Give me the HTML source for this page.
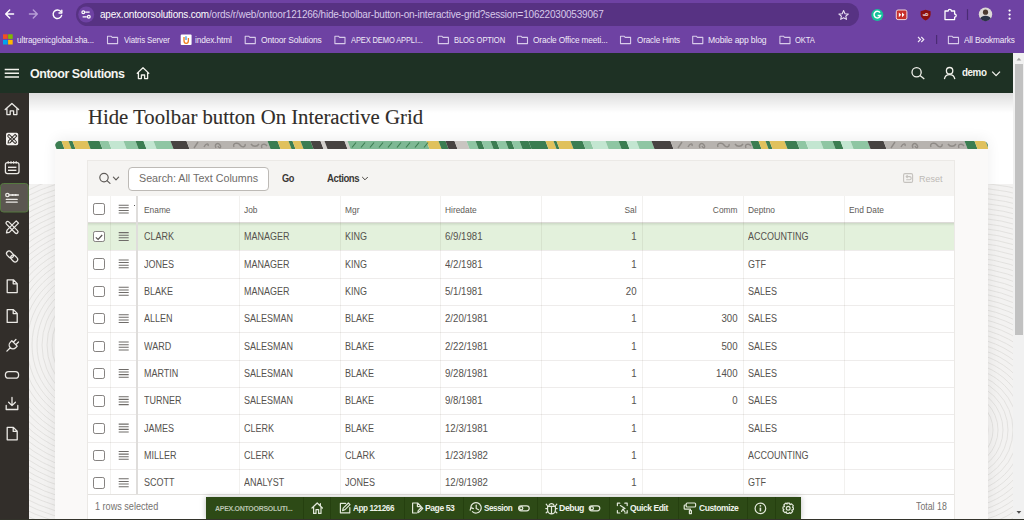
<!DOCTYPE html><html><head><meta charset="utf-8"><style>*{box-sizing:border-box;margin:0;padding:0}
html,body{width:1024px;height:520px;overflow:hidden;font-family:"Liberation Sans",sans-serif;background:#fff;position:relative}
.abs{position:absolute}
svg{position:absolute;overflow:visible}
#chrome{position:absolute;left:0;top:0;width:1024px;height:53px;background:#6e42a3}
#addr{position:absolute;left:75.5px;top:3px;width:783px;height:23px;border-radius:11.5px;background:#573283}
.url{position:absolute;left:100px;top:8.7px;font-size:10px;letter-spacing:-0.2px;color:#d7c9ea;white-space:nowrap}
.url b{font-weight:normal;color:#fff}
.bm{position:absolute;top:34px;font-size:9.5px;color:#f1ebf8;white-space:nowrap;letter-spacing:-0.15px}
#hdr{position:absolute;left:0;top:53px;width:1013px;height:40px;background:#1e3124}
.brand{position:absolute;left:29.5px;top:66.7px;font-size:12.5px;font-weight:bold;color:#f4f4f0;letter-spacing:-0.47px;white-space:nowrap}
#side{position:absolute;left:0;top:93px;width:29px;height:427px;background:#322e2a}
#tex{position:absolute;left:29px;top:93px;width:984px;height:427px;background:#f3f2f1}
#hero{position:absolute;left:29px;top:93px;width:984px;height:91px;background:#fff}
.title{position:absolute;left:87.5px;top:105.8px;font-family:"Liberation Serif",serif;font-size:20px;color:#312d2a;white-space:nowrap;-webkit-text-stroke:0.12px #312d2a}
#region{position:absolute;left:55px;top:141px;width:933px;height:379px;background:#faf9f8;border-radius:5px 5px 0 0}
#stripe{position:absolute;left:55px;top:141px;width:933px;height:8px;border-radius:5px 5px 0 0;overflow:hidden}
#tb{position:absolute;left:87px;top:160px;width:868px;height:36px;background:#f5f4f2;border:1px solid #ebe9e6;border-bottom:none}
.search{position:absolute;left:127.5px;top:166.5px;width:141px;height:24px;border:1px solid #bdbab6;border-radius:4px;background:#fff}
.ph{position:absolute;left:138.5px;top:172px;font-size:10.8px;color:#6f6c69;white-space:nowrap}
.btxt{position:absolute;font-size:10.2px;font-weight:bold;color:#3b3835;white-space:nowrap;letter-spacing:-0.45px}
#gbody{position:absolute;left:87px;top:196px;width:868px;height:324px;background:#fff;border-left:1px solid #ebe9e6;border-right:1px solid #ebe9e6}
.hdrrow{position:absolute;left:88px;width:866px;height:27px;background:#fff;border-bottom:1px solid #dcdad7}
.row{position:absolute;left:88px;width:866px;background:#fff}
.hl{position:absolute;left:88px;width:866px;height:1px;background:rgba(60,40,20,.085)}
.row.sel{background:#e3f1dc}
.vl{position:absolute;top:196px;width:1px;height:298px;background:rgba(60,40,20,.065)}
.cb{position:absolute;width:11.3px;height:11.3px;border:1.2px solid #858280;border-radius:2.2px;background:#fff}
.rm{position:absolute;width:10px;height:9px}
.rm i{display:block;height:1.1px;background:#6a6764;margin-bottom:1.55px}
.ht{position:absolute;font-size:9px;color:#5e5b58;white-space:nowrap}
.ct{position:absolute;font-size:10px;color:#55524e;white-space:nowrap;letter-spacing:-0.3px}
.r{text-align:right}
#foot{position:absolute;left:88px;top:494px;width:866px;height:25px;background:#fff;border-top:1px solid #e3e1de}
.ft{position:absolute;top:501px;font-size:10px;color:#75726f;white-space:nowrap}
#scroll{position:absolute;left:1013px;top:53px;width:11px;height:467px;background:#f1f1f1}
#thumb{position:absolute;left:1015px;top:64px;width:8px;height:271px;background:#c1c1c1}
#dev{position:absolute;left:206px;top:497px;width:595px;height:22px;background:#2d4a16;box-shadow:0 0 6px rgba(0,0,0,.25)}
.dt{position:absolute;top:501.9px;font-size:9.7px;font-weight:bold;color:#eef2ea;white-space:nowrap;letter-spacing:-0.5px}
.dsep{position:absolute;top:497px;width:1px;height:22px;background:#25400f}
#bline{position:absolute;left:0;top:519px;width:1024px;height:1px;background:#33332b}
.demo{position:absolute;left:961.5px;top:67.3px;font-size:10.3px;font-weight:bold;color:#f4f4f0;letter-spacing:-0.45px}
.reset{position:absolute;left:919.4px;top:173px;font-size:9.8px;color:#bdbab6;white-space:nowrap}
.dt.dim{color:#b9c4b0;font-size:7.4px;top:504px;letter-spacing:-0.3px}
.ct.u{transform:scaleX(.9);transform-origin:0 0;letter-spacing:0}
.ct.d{transform:scaleX(.965);transform-origin:0 0;letter-spacing:0}
.ct.dr{transform:scaleX(.965);transform-origin:100% 0;letter-spacing:0}
.ct.ur{transform:scaleX(.9);transform-origin:100% 0;letter-spacing:0}
.ht{transform:scaleX(.93);transform-origin:0 0}
.ht.r{transform-origin:100% 0}
#hshadow{position:absolute;left:29px;top:93px;width:984px;height:20px;background:linear-gradient(rgba(0,0,0,.13),rgba(0,0,0,0))}
#region{box-shadow:0 -2px 14px rgba(0,0,0,.07)}
#sideshadow{position:absolute;left:29px;top:93px;width:3px;height:427px;background:linear-gradient(90deg,rgba(0,0,0,.15),rgba(0,0,0,0))}
#hrshadow{position:absolute;left:88px;top:222.5px;width:866px;height:3px;background:linear-gradient(rgba(0,0,0,.10),rgba(0,0,0,0))}
</style></head><body><div id="chrome">
 <div id="addr"></div>
</div>
<div class="url" style="left:100px;transform:scaleX(0.9983);transform-origin:0 0"><b>apex.ontoorsolutions.com</b>/ords/r/web/ontoor121266/hide-toolbar-button-on-interactive-grid?session=106220300539067</div>
<div class="bm" style="left:17.3px;transform:scaleX(0.8653);transform-origin:0 0">ultragenicglobal.sha...</div>
<div class="bm" style="left:123.6px;transform:scaleX(0.8347);transform-origin:0 0">Viatris Server</div>
<div class="bm" style="left:195.4px;transform:scaleX(0.8801);transform-origin:0 0">index.html</div>
<div class="bm" style="left:261.2px;transform:scaleX(0.8863);transform-origin:0 0">Ontoor Solutions</div>
<div class="bm" style="left:351px;transform:scaleX(0.7910);transform-origin:0 0">APEX DEMO APPLI...</div>
<div class="bm" style="left:454px;transform:scaleX(0.7992);transform-origin:0 0">BLOG OPTION</div>
<div class="bm" style="left:532.8px;transform:scaleX(0.8711);transform-origin:0 0">Oracle Office meeti...</div>
<div class="bm" style="left:636.6px;transform:scaleX(0.8520);transform-origin:0 0">Oracle Hints</div>
<div class="bm" style="left:708.4px;transform:scaleX(0.9024);transform-origin:0 0">Mobile app blog</div>
<div class="bm" style="left:795px;transform:scaleX(0.8020);transform-origin:0 0">OKTA</div>
<div class="bm" style="left:964px;transform:scaleX(0.8645);transform-origin:0 0">All Bookmarks</div>
<div id="hdr"></div>
<div class="brand" style="left:29.7px;transform:scaleX(0.9993);transform-origin:0 0">Ontoor Solutions</div>
<div class="demo" style="left:961.7px;transform:scaleX(0.9544);transform-origin:0 0">demo</div>
<div id="side"></div>
<div id="tex"></div>
<svg width="1024" height="520" style="left:0;top:0"><defs><clipPath id="tc"><rect x="29" y="184" width="26" height="336"/><rect x="988" y="184" width="25" height="336"/></clipPath></defs><g clip-path="url(#tc)" fill="none" stroke="#dedddb" stroke-width="0.8"><circle cx="105" cy="345" r="8"/><circle cx="105" cy="345" r="13"/><circle cx="105" cy="345" r="18"/><circle cx="105" cy="345" r="23"/><circle cx="105" cy="345" r="28"/><circle cx="105" cy="345" r="33"/><circle cx="105" cy="345" r="38"/><circle cx="105" cy="345" r="43"/><circle cx="105" cy="345" r="48"/><circle cx="105" cy="345" r="53"/><circle cx="105" cy="345" r="58"/><circle cx="105" cy="345" r="63"/><circle cx="105" cy="345" r="68"/><circle cx="105" cy="345" r="73"/><circle cx="105" cy="345" r="78"/><circle cx="105" cy="345" r="83"/><circle cx="105" cy="345" r="88"/><circle cx="105" cy="345" r="93"/><circle cx="105" cy="345" r="98"/><circle cx="105" cy="345" r="103"/><circle cx="105" cy="345" r="108"/><circle cx="105" cy="345" r="113"/><circle cx="105" cy="345" r="118"/><circle cx="105" cy="345" r="123"/><circle cx="105" cy="345" r="128"/><circle cx="105" cy="345" r="133"/><circle cx="105" cy="345" r="138"/><circle cx="105" cy="345" r="143"/><circle cx="105" cy="345" r="148"/><circle cx="105" cy="345" r="153"/><circle cx="105" cy="345" r="158"/><circle cx="105" cy="345" r="163"/><circle cx="105" cy="345" r="168"/><circle cx="105" cy="345" r="173"/><circle cx="105" cy="345" r="178"/><circle cx="105" cy="345" r="183"/><circle cx="105" cy="345" r="188"/><circle cx="105" cy="345" r="193"/><circle cx="105" cy="345" r="198"/><circle cx="105" cy="345" r="203"/><circle cx="105" cy="345" r="208"/><circle cx="105" cy="345" r="213"/><circle cx="105" cy="345" r="218"/><circle cx="105" cy="345" r="223"/><circle cx="105" cy="345" r="228"/><circle cx="105" cy="345" r="233"/><circle cx="105" cy="345" r="238"/><circle cx="105" cy="345" r="243"/><circle cx="105" cy="345" r="248"/><circle cx="105" cy="345" r="253"/><circle cx="105" cy="345" r="258"/><circle cx="105" cy="345" r="263"/><circle cx="105" cy="345" r="268"/><circle cx="105" cy="345" r="273"/><circle cx="105" cy="345" r="278"/><circle cx="105" cy="345" r="283"/><circle cx="105" cy="345" r="288"/><circle cx="105" cy="345" r="293"/><circle cx="105" cy="345" r="298"/><circle cx="105" cy="345" r="303"/><circle cx="105" cy="345" r="308"/><circle cx="105" cy="345" r="313"/><circle cx="105" cy="345" r="318"/><circle cx="960" cy="430" r="8"/><circle cx="960" cy="430" r="13"/><circle cx="960" cy="430" r="18"/><circle cx="960" cy="430" r="23"/><circle cx="960" cy="430" r="28"/><circle cx="960" cy="430" r="33"/><circle cx="960" cy="430" r="38"/><circle cx="960" cy="430" r="43"/><circle cx="960" cy="430" r="48"/><circle cx="960" cy="430" r="53"/><circle cx="960" cy="430" r="58"/><circle cx="960" cy="430" r="63"/><circle cx="960" cy="430" r="68"/><circle cx="960" cy="430" r="73"/><circle cx="960" cy="430" r="78"/><circle cx="960" cy="430" r="83"/><circle cx="960" cy="430" r="88"/><circle cx="960" cy="430" r="93"/><circle cx="960" cy="430" r="98"/><circle cx="960" cy="430" r="103"/><circle cx="960" cy="430" r="108"/><circle cx="960" cy="430" r="113"/><circle cx="960" cy="430" r="118"/><circle cx="960" cy="430" r="123"/><circle cx="960" cy="430" r="128"/><circle cx="960" cy="430" r="133"/><circle cx="960" cy="430" r="138"/><circle cx="960" cy="430" r="143"/><circle cx="960" cy="430" r="148"/><circle cx="960" cy="430" r="153"/><circle cx="960" cy="430" r="158"/><circle cx="960" cy="430" r="163"/><circle cx="960" cy="430" r="168"/><circle cx="960" cy="430" r="173"/><circle cx="960" cy="430" r="178"/><circle cx="960" cy="430" r="183"/><circle cx="960" cy="430" r="188"/><circle cx="960" cy="430" r="193"/><circle cx="960" cy="430" r="198"/><circle cx="960" cy="430" r="203"/><circle cx="960" cy="430" r="208"/><circle cx="960" cy="430" r="213"/><circle cx="960" cy="430" r="218"/><circle cx="960" cy="430" r="223"/><circle cx="960" cy="430" r="228"/><circle cx="960" cy="430" r="233"/><circle cx="960" cy="430" r="238"/><circle cx="960" cy="430" r="243"/><circle cx="960" cy="430" r="248"/><circle cx="960" cy="430" r="253"/><circle cx="960" cy="430" r="258"/><circle cx="960" cy="430" r="263"/><circle cx="960" cy="430" r="268"/><circle cx="960" cy="430" r="273"/><circle cx="960" cy="430" r="278"/><circle cx="960" cy="430" r="283"/><circle cx="960" cy="430" r="288"/><circle cx="960" cy="430" r="293"/><circle cx="960" cy="430" r="298"/><circle cx="960" cy="430" r="303"/><circle cx="960" cy="430" r="308"/><circle cx="960" cy="430" r="313"/><circle cx="960" cy="430" r="318"/></g></svg><div id="hero"></div><div id="hshadow"></div>
<div class="title" style="left:87.9px;transform:scaleX(1.0367);transform-origin:0 0">Hide Toolbar button On Interactive Grid</div>
<div id="region"></div>
<div id="stripe"><svg width="933" height="8" viewBox="0 0 933 8" style="left:0;top:0"><path d="M-1.5 0H6.5L9.5 8H1.5Z" fill="#3b7d51"/><path d="M6.5 0H13.5L16.5 8H9.5Z" fill="#e0c15c"/><path d="M13.5 0H17.5L20.5 8H16.5Z" fill="#3b7d51"/><path d="M17.5 0H32.5L35.5 8H20.5Z" fill="#e0c15c"/><path d="M32.5 0H44.5L47.5 8H35.5Z" fill="#3b7d51"/><path d="M44.5 0H53.5L56.5 8H47.5Z" fill="#8fc6a3"/><path d="M53.5 0H68.5L71.5 8H56.5Z" fill="#c3e6d1"/><path d="M68.5 0H80.5L83.5 8H71.5Z" fill="#8fc6a3"/><path d="M80.5 0H88.5L91.5 8H83.5Z" fill="#3b7d51"/><path d="M88.5 0H98.5L101.5 8H91.5Z" fill="#c3e6d1"/><path d="M98.5 0H115.5L118.5 8H101.5Z" fill="#8fc6a3"/><path d="M115.5 0H131.5L134.5 8H118.5Z" fill="#474341"/><path d="M131.5 0H212.5L215.5 8H134.5Z" fill="#b7b3af"/><path d="M212.5 0H222.5L225.5 8H215.5Z" fill="#3b7d51"/><path d="M222.5 0H233.5L236.5 8H225.5Z" fill="#e0c15c"/><path d="M233.5 0H237.5L240.5 8H236.5Z" fill="#3b7d51"/><path d="M237.5 0H245.5L248.5 8H240.5Z" fill="#e0c15c"/><path d="M245.5 0H255.5L258.5 8H248.5Z" fill="#3b7d51"/><path d="M255.5 0H265.5L268.5 8H258.5Z" fill="#474341"/><path d="M265.5 0H269.5L272.5 8H268.5Z" fill="#d3d0cc"/><path d="M269.5 0H289.5L292.5 8H272.5Z" fill="#474341"/><path d="M289.5 0H292.5L295.5 8H292.5Z" fill="#d3d0cc"/><path d="M292.5 0H371.5L374.5 8H295.5Z" fill="#7eb894"/><path d="M371.5 0H383.5L386.5 8H374.5Z" fill="#e0c15c"/><path d="M383.5 0H390.5L393.5 8H386.5Z" fill="#3b7d51"/><path d="M390.5 0H399.5L402.5 8H393.5Z" fill="#474341"/><path d="M399.5 0H411.5L414.5 8H402.5Z" fill="#c9c5c1"/><path d="M411.5 0H420.5L423.5 8H414.5Z" fill="#8fc6a3"/><path d="M420.5 0H426.5L429.5 8H423.5Z" fill="#3b7d51"/><path d="M426.5 0H435.5L438.5 8H429.5Z" fill="#8fc6a3"/><path d="M435.5 0H441.5L444.5 8H438.5Z" fill="#3b7d51"/><path d="M441.5 0H450.5L453.5 8H444.5Z" fill="#8fc6a3"/><path d="M450.5 0H456.5L459.5 8H453.5Z" fill="#3b7d51"/><path d="M456.5 0H464.5L467.5 8H459.5Z" fill="#8fc6a3"/><path d="M464.5 0H473.5L476.5 8H467.5Z" fill="#3b7d51"/><path d="M473.5 0H490.5L493.5 8H476.5Z" fill="#3b7d51"/><path d="M490.5 0H498.5L501.5 8H493.5Z" fill="#e0c15c"/><path d="M498.5 0H501.5L504.5 8H501.5Z" fill="#3b7d51"/><path d="M501.5 0H515.5L518.5 8H504.5Z" fill="#e0c15c"/><path d="M515.5 0H527.5L530.5 8H518.5Z" fill="#3b7d51"/><path d="M527.5 0H535.5L538.5 8H530.5Z" fill="#8fc6a3"/><path d="M535.5 0H550.5L553.5 8H538.5Z" fill="#c3e6d1"/><path d="M550.5 0H563.5L566.5 8H553.5Z" fill="#8fc6a3"/><path d="M563.5 0H571.5L574.5 8H566.5Z" fill="#3b7d51"/><path d="M571.5 0H581.5L584.5 8H574.5Z" fill="#c3e6d1"/><path d="M581.5 0H596.5L599.5 8H584.5Z" fill="#8fc6a3"/><path d="M596.5 0H615.5L618.5 8H599.5Z" fill="#474341"/><path d="M615.5 0H695.5L698.5 8H618.5Z" fill="#b7b3af"/><path d="M695.5 0H703.5L706.5 8H698.5Z" fill="#3b7d51"/><path d="M703.5 0H710.5L713.5 8H706.5Z" fill="#e0c15c"/><path d="M710.5 0H714.5L717.5 8H713.5Z" fill="#3b7d51"/><path d="M714.5 0H729.5L732.5 8H717.5Z" fill="#e0c15c"/><path d="M729.5 0H741.5L744.5 8H732.5Z" fill="#3b7d51"/><path d="M741.5 0H750.5L753.5 8H744.5Z" fill="#8fc6a3"/><path d="M750.5 0H765.5L768.5 8H753.5Z" fill="#c3e6d1"/><path d="M765.5 0H777.5L780.5 8H768.5Z" fill="#8fc6a3"/><path d="M777.5 0H785.5L788.5 8H780.5Z" fill="#3b7d51"/><path d="M785.5 0H795.5L798.5 8H788.5Z" fill="#c3e6d1"/><path d="M795.5 0H812.5L815.5 8H798.5Z" fill="#8fc6a3"/><path d="M812.5 0H828.5L831.5 8H815.5Z" fill="#474341"/><path d="M828.5 0H909.5L912.5 8H831.5Z" fill="#b7b3af"/><path d="M909.5 0H919.5L922.5 8H912.5Z" fill="#3b7d51"/><path d="M919.5 0H930.5L933.5 8H922.5Z" fill="#e0c15c"/><path d="M930.5 0H934.5L937.5 8H933.5Z" fill="#3b7d51"/><path d="M934.5 0H942.5L945.5 8H937.5Z" fill="#e0c15c"/><path d="M942.5 0H943.5L946.5 8H945.5Z" fill="#3b7d51"/><g transform="translate(133)" fill="none" stroke="#8f8b87" stroke-width="1.4"><path d="M6 7L10 1M16 6C18 2 21 2 20 5M28 7C26 3 30 1 32 4C34 7 31 8 30 5M46 6C44 2 50 1 52 4C54 7 58 6 57 3M63 3C65 6 69 6 71 3M74 7C72 3 77 2 79 5"/></g><path d="M297 6.5L301 1.5" stroke="#3b7d51" stroke-width="1.1"/><path d="M306 6.5L310 1.5" stroke="#3b7d51" stroke-width="1.1"/><path d="M315 6.5L319 1.5" stroke="#3b7d51" stroke-width="1.1"/><path d="M324 6.5L328 1.5" stroke="#3b7d51" stroke-width="1.1"/><path d="M333 6.5L337 1.5" stroke="#3b7d51" stroke-width="1.1"/><path d="M342 6.5L346 1.5" stroke="#3b7d51" stroke-width="1.1"/><path d="M351 6.5L355 1.5" stroke="#3b7d51" stroke-width="1.1"/><path d="M360 6.5L364 1.5" stroke="#3b7d51" stroke-width="1.1"/><path d="M369 6.5L373 1.5" stroke="#3b7d51" stroke-width="1.1"/><g transform="translate(617)" fill="none" stroke="#8f8b87" stroke-width="1.4"><path d="M6 7L10 1M16 6C18 2 21 2 20 5M28 7C26 3 30 1 32 4C34 7 31 8 30 5M46 6C44 2 50 1 52 4C54 7 58 6 57 3M63 3C65 6 69 6 71 3M74 7C72 3 77 2 79 5"/></g><g transform="translate(830)" fill="none" stroke="#8f8b87" stroke-width="1.4"><path d="M6 7L10 1M16 6C18 2 21 2 20 5M28 7C26 3 30 1 32 4C34 7 31 8 30 5M46 6C44 2 50 1 52 4C54 7 58 6 57 3M63 3C65 6 69 6 71 3M74 7C72 3 77 2 79 5"/></g></svg></div>
<div id="tb"></div>
<div class="search"></div>
<div class="ph" style="left:138.5px;transform:scaleX(0.9931);transform-origin:0 0">Search: All Text Columns</div>
<div class="btxt" style="left:282.2px;top:172.5px;transform:scaleX(0.9057);transform-origin:0 0">Go</div>
<div class="btxt" style="left:327px;top:172.5px;transform:scaleX(0.9410);transform-origin:0 0">Actions</div>
<div class="reset" style="left:919.4px;transform:scaleX(0.9221);transform-origin:0 0">Reset</div>
<div id="gbody"></div>

<div id="gridcells"><div class="hdrrow" style="top:196px"></div>
<div class="cb" style="left:93.3px;top:203.4px"></div>

<div class="abs" style="left:134px;top:205px;width:1.3px;height:1.3px;background:#555"></div>
<div class="ht" style="left:143.5px;top:204.5px">Ename</div>
<div class="ht" style="left:243.8px;top:204.5px">Job</div>
<div class="ht" style="left:344.6px;top:204.5px">Mgr</div>
<div class="ht" style="left:445.4px;top:204.5px">Hiredate</div>
<div class="ht r" style="left:541.3px;width:95.50000000000007px;top:204.5px">Sal</div>
<div class="ht r" style="left:642.1px;width:95.49999999999996px;top:204.5px">Comm</div>
<div class="ht" style="left:747.9px;top:204.5px">Deptno</div>
<div class="ht" style="left:848.7px;top:204.5px">End Date</div>
<div class="row sel" style="top:222.9px;height:27.86px"></div>
<div class="cb" style="left:93.3px;top:231.1px"><svg width="11" height="11" viewBox="0 0 11 11" style="position:absolute;left:-0.5px;top:-0.5px"><path d="M1.8 5.4 L4.1 7.5 L8.2 3.0" fill="none" stroke="#55524f" stroke-width="1.15"/></svg></div>

<div class="ct u" style="left:143.5px;top:231.20000000000002px">CLARK</div>
<div class="ct u" style="left:243.8px;top:231.20000000000002px">MANAGER</div>
<div class="ct u" style="left:344.6px;top:231.20000000000002px">KING</div>
<div class="ct d" style="left:445.4px;top:231.20000000000002px">6/9/1981</div>
<div class="ct r dr" style="left:541.3px;width:95.50000000000007px;top:231.20000000000002px">1</div>
<div class="ct u" style="left:747.9px;top:231.20000000000002px">ACCOUNTING</div>
<div class="row" style="top:250.26px;height:27.86px"></div>
<div class="hl" style="top:250.26px"></div>
<div class="cb" style="left:93.3px;top:258.46px"></div>

<div class="ct u" style="left:143.5px;top:258.56px">JONES</div>
<div class="ct u" style="left:243.8px;top:258.56px">MANAGER</div>
<div class="ct u" style="left:344.6px;top:258.56px">KING</div>
<div class="ct d" style="left:445.4px;top:258.56px">4/2/1981</div>
<div class="ct r dr" style="left:541.3px;width:95.50000000000007px;top:258.56px">1</div>
<div class="ct u" style="left:747.9px;top:258.56px">GTF</div>
<div class="row" style="top:277.62px;height:27.86px"></div>
<div class="hl" style="top:277.62px"></div>
<div class="cb" style="left:93.3px;top:285.82px"></div>

<div class="ct u" style="left:143.5px;top:285.92px">BLAKE</div>
<div class="ct u" style="left:243.8px;top:285.92px">MANAGER</div>
<div class="ct u" style="left:344.6px;top:285.92px">KING</div>
<div class="ct d" style="left:445.4px;top:285.92px">5/1/1981</div>
<div class="ct r dr" style="left:541.3px;width:95.50000000000007px;top:285.92px">20</div>
<div class="ct u" style="left:747.9px;top:285.92px">SALES</div>
<div class="row" style="top:304.98px;height:27.86px"></div>
<div class="hl" style="top:304.98px"></div>
<div class="cb" style="left:93.3px;top:313.18px"></div>

<div class="ct u" style="left:143.5px;top:313.28000000000003px">ALLEN</div>
<div class="ct u" style="left:243.8px;top:313.28000000000003px">SALESMAN</div>
<div class="ct u" style="left:344.6px;top:313.28000000000003px">BLAKE</div>
<div class="ct d" style="left:445.4px;top:313.28000000000003px">2/20/1981</div>
<div class="ct r dr" style="left:541.3px;width:95.50000000000007px;top:313.28000000000003px">1</div>
<div class="ct r dr" style="left:642.1px;width:95.49999999999996px;top:313.28000000000003px">300</div>
<div class="ct u" style="left:747.9px;top:313.28000000000003px">SALES</div>
<div class="row" style="top:332.34000000000003px;height:27.86px"></div>
<div class="hl" style="top:332.34px"></div>
<div class="cb" style="left:93.3px;top:340.54px"></div>

<div class="ct u" style="left:143.5px;top:340.64000000000004px">WARD</div>
<div class="ct u" style="left:243.8px;top:340.64000000000004px">SALESMAN</div>
<div class="ct u" style="left:344.6px;top:340.64000000000004px">BLAKE</div>
<div class="ct d" style="left:445.4px;top:340.64000000000004px">2/22/1981</div>
<div class="ct r dr" style="left:541.3px;width:95.50000000000007px;top:340.64000000000004px">1</div>
<div class="ct r dr" style="left:642.1px;width:95.49999999999996px;top:340.64000000000004px">500</div>
<div class="ct u" style="left:747.9px;top:340.64000000000004px">SALES</div>
<div class="row" style="top:359.70000000000005px;height:27.86px"></div>
<div class="hl" style="top:359.70px"></div>
<div class="cb" style="left:93.3px;top:367.90000000000003px"></div>

<div class="ct u" style="left:143.5px;top:368.00000000000006px">MARTIN</div>
<div class="ct u" style="left:243.8px;top:368.00000000000006px">SALESMAN</div>
<div class="ct u" style="left:344.6px;top:368.00000000000006px">BLAKE</div>
<div class="ct d" style="left:445.4px;top:368.00000000000006px">9/28/1981</div>
<div class="ct r dr" style="left:541.3px;width:95.50000000000007px;top:368.00000000000006px">1</div>
<div class="ct r dr" style="left:642.1px;width:95.49999999999996px;top:368.00000000000006px">1400</div>
<div class="ct u" style="left:747.9px;top:368.00000000000006px">SALES</div>
<div class="row" style="top:387.06px;height:27.86px"></div>
<div class="hl" style="top:387.06px"></div>
<div class="cb" style="left:93.3px;top:395.26px"></div>

<div class="ct u" style="left:143.5px;top:395.36px">TURNER</div>
<div class="ct u" style="left:243.8px;top:395.36px">SALESMAN</div>
<div class="ct u" style="left:344.6px;top:395.36px">BLAKE</div>
<div class="ct d" style="left:445.4px;top:395.36px">9/8/1981</div>
<div class="ct r dr" style="left:541.3px;width:95.50000000000007px;top:395.36px">1</div>
<div class="ct r dr" style="left:642.1px;width:95.49999999999996px;top:395.36px">0</div>
<div class="ct u" style="left:747.9px;top:395.36px">SALES</div>
<div class="row" style="top:414.41999999999996px;height:27.86px"></div>
<div class="hl" style="top:414.42px"></div>
<div class="cb" style="left:93.3px;top:422.61999999999995px"></div>

<div class="ct u" style="left:143.5px;top:422.71999999999997px">JAMES</div>
<div class="ct u" style="left:243.8px;top:422.71999999999997px">CLERK</div>
<div class="ct u" style="left:344.6px;top:422.71999999999997px">BLAKE</div>
<div class="ct d" style="left:445.4px;top:422.71999999999997px">12/3/1981</div>
<div class="ct r dr" style="left:541.3px;width:95.50000000000007px;top:422.71999999999997px">1</div>
<div class="ct u" style="left:747.9px;top:422.71999999999997px">SALES</div>
<div class="row" style="top:441.78px;height:27.86px"></div>
<div class="hl" style="top:441.78px"></div>
<div class="cb" style="left:93.3px;top:449.97999999999996px"></div>

<div class="ct u" style="left:143.5px;top:450.08px">MILLER</div>
<div class="ct u" style="left:243.8px;top:450.08px">CLERK</div>
<div class="ct u" style="left:344.6px;top:450.08px">CLARK</div>
<div class="ct d" style="left:445.4px;top:450.08px">1/23/1982</div>
<div class="ct r dr" style="left:541.3px;width:95.50000000000007px;top:450.08px">1</div>
<div class="ct u" style="left:747.9px;top:450.08px">ACCOUNTING</div>
<div class="row" style="top:469.14px;height:27.86px"></div>
<div class="hl" style="top:469.14px"></div>
<div class="cb" style="left:93.3px;top:477.34px"></div>

<div class="ct u" style="left:143.5px;top:477.44px">SCOTT</div>
<div class="ct u" style="left:243.8px;top:477.44px">ANALYST</div>
<div class="ct u" style="left:344.6px;top:477.44px">JONES</div>
<div class="ct d" style="left:445.4px;top:477.44px">12/9/1982</div>
<div class="ct r dr" style="left:541.3px;width:95.50000000000007px;top:477.44px">1</div>
<div class="ct u" style="left:747.9px;top:477.44px">GTF</div>
<div id="hrshadow"></div>
<svg width="1024" height="520" style="left:0;top:0"><path d="M118.7 205.20H128.7M118.7 207.82H128.7M118.7 210.44H128.7M118.7 213.06H128.7M118.7 232.60H128.7M118.7 235.22H128.7M118.7 237.84H128.7M118.7 240.46H128.7M118.7 259.96H128.7M118.7 262.58H128.7M118.7 265.20H128.7M118.7 267.82H128.7M118.7 287.32H128.7M118.7 289.94H128.7M118.7 292.56H128.7M118.7 295.18H128.7M118.7 314.68H128.7M118.7 317.30H128.7M118.7 319.92H128.7M118.7 322.54H128.7M118.7 342.04H128.7M118.7 344.66H128.7M118.7 347.28H128.7M118.7 349.90H128.7M118.7 369.40H128.7M118.7 372.02H128.7M118.7 374.64H128.7M118.7 377.26H128.7M118.7 396.76H128.7M118.7 399.38H128.7M118.7 402.00H128.7M118.7 404.62H128.7M118.7 424.12H128.7M118.7 426.74H128.7M118.7 429.36H128.7M118.7 431.98H128.7M118.7 451.48H128.7M118.7 454.10H128.7M118.7 456.72H128.7M118.7 459.34H128.7M118.7 478.84H128.7M118.7 481.46H128.7M118.7 484.08H128.7M118.7 486.70H128.7" stroke="#6f6c69" stroke-width="1.05" fill="none"/></svg>
<div class="vl" style="left:110px"></div>
<div class="abs" style="left:136px;top:196px;width:2px;height:298px;background:#dfdddb"></div>
<div class="vl" style="left:238.8px"></div>
<div class="vl" style="left:339.6px"></div>
<div class="vl" style="left:440.4px"></div>
<div class="vl" style="left:541.3px"></div>
<div class="vl" style="left:642.1px"></div>
<div class="vl" style="left:742.9px"></div>
<div class="vl" style="left:843.7px"></div></div>
<div id="foot"></div>
<div class="ft" style="left:95.2px;transform:scaleX(0.9096);transform-origin:0 0">1 rows selected</div>
<div class="ft" style="left:916.2px;transform:scaleX(0.8792);transform-origin:0 0">Total 18</div>
<div id="scroll"></div>
<div id="thumb"></div>
<div id="dev"></div>
<div class="dsep" style="left:302.6px"></div>
<div class="dsep" style="left:330.2px"></div>
<div class="dsep" style="left:403.8px"></div>
<div class="dsep" style="left:462.8px"></div>
<div class="dsep" style="left:537.3px"></div>
<div class="dsep" style="left:608.6px"></div>
<div class="dsep" style="left:677.6px"></div>
<div class="dsep" style="left:746.6px"></div>
<div class="dsep" style="left:774.6px"></div>
<div class="dt dim" style="left:214.5px;transform:scaleX(0.9468);transform-origin:0 0">APEX.ONTOORSOLUTI...</div>
<div class="dt" style="left:353px;transform:scaleX(0.8391);transform-origin:0 0">App 121266</div>
<div class="dt" style="left:424.7px;transform:scaleX(0.8845);transform-origin:0 0">Page 53</div>
<div class="dt" style="left:484.3px;transform:scaleX(0.8409);transform-origin:0 0">Session</div>
<div class="dt" style="left:559.2px;transform:scaleX(0.9045);transform-origin:0 0">Debug</div>
<div class="dt" style="left:630px;transform:scaleX(0.8807);transform-origin:0 0">Quick Edit</div>
<div class="dt" style="left:698.7px;transform:scaleX(0.8835);transform-origin:0 0">Customize</div>
<div id="bline"></div>
<svg id="ov" width="1024" height="520" viewBox="0 0 1024 520" style="left:0;top:0">
 <!-- chrome nav -->
 <g fill="none" stroke="#fff" stroke-width="1.4" stroke-linecap="round" stroke-linejoin="round">
  <path d="M13.6 14H5.9M9.7 10L5.7 14L9.7 18"/>
  <path d="M29.4 14H37.1M33.3 10L37.3 14L33.3 18" stroke="#b79ed6"/>
  <path d="M61.6 15.4A4.3 4.3 0 1 1 60.6 11.3"/>
  <path d="M61.8 10.2V13H59"/>
 </g>
 <circle cx="86.2" cy="14.5" r="8" fill="#6e42a3"/>
 <g fill="none" stroke="#fff" stroke-width="1.2">
  <circle cx="83.3" cy="12.2" r="1.4"/><path d="M85.2 12.2H89.6M82.6 16.8H86.8"/><circle cx="88.8" cy="16.8" r="1.4"/>
 </g>
 <path d="M843.6 10.6L845 13.7L848.3 14L845.8 16.2L846.5 19.4L843.6 17.7L840.7 19.4L841.4 16.2L838.9 14L842.2 13.7Z" fill="none" stroke="#e9e0f3" stroke-width="1.1" stroke-linejoin="round"/>
 <circle cx="877.3" cy="15" r="6" fill="#15c39a"/>
 <path d="M880 12.6A3.3 3.3 0 1 0 880.6 15.4H877.6" fill="none" stroke="#fff" stroke-width="1.5"/>
 <rect x="896.3" y="10" width="10.6" height="9.6" rx="1.8" fill="#c7302c" stroke="#f3d7d7" stroke-width="1"/>
 <path d="M898.8 12.4L901.2 14.8L898.8 17.2ZM902 12.4L904.4 14.8L902 17.2Z" fill="#fff"/>
 <path d="M920.6 11.2L925.6 9.8L930.6 11.2V14.5C930.6 17.4 928.2 19.2 925.6 20.4C923 19.2 920.6 17.4 920.6 14.5Z" fill="#8c0f0f"/>
 <text x="925.6" y="16.3" font-size="4.2" fill="#fff" text-anchor="middle" font-family="Liberation Sans" font-weight="bold">uD</text>
 <path d="M945 11H948.2A1.6 1.6 0 0 1 951.4 11H954.6V14A1.6 1.6 0 0 1 954.6 17.2V19.6H945Z" fill="none" stroke="#fff" stroke-width="1.3" stroke-linejoin="round"/>
 <path d="M967.5 9.2V20" stroke="#4a2b74" stroke-width="1.2"/>
 <circle cx="985.5" cy="14.3" r="6.7" fill="#dcd9d6"/>
 <path d="M980.2 18.6C981 16.6 983 15.8 985.5 15.8C988 15.8 990 16.6 990.8 18.6A6.7 6.7 0 0 1 980.2 18.6Z" fill="#2a3346"/>
 <circle cx="985.5" cy="12.2" r="2.6" fill="#4a3a30"/>
 <g fill="#fff"><circle cx="1009.6" cy="10.6" r="1.15"/><circle cx="1009.6" cy="14.6" r="1.15"/><circle cx="1009.6" cy="18.6" r="1.15"/></g>
 <!-- bookmarks -->
 <rect x="3" y="34.3" width="4.6" height="4.6" fill="#f25022"/><rect x="8.1" y="34.3" width="4.6" height="4.6" fill="#7fba00"/>
 <rect x="3" y="39.9" width="4.6" height="4.6" fill="#00a4ef"/><rect x="8.1" y="39.9" width="4.6" height="4.6" fill="#ffb900"/>
 <rect x="180.7" y="34.5" width="10.9" height="10.5" rx="1" fill="#fff"/>
 <path d="M184 37V40.5C184 42.5 185 43.4 186.2 43.4C187.4 43.4 188.4 42.5 188.4 40.5V38" fill="none" stroke="#f07a1a" stroke-width="1.3"/>
 <path d="M186 36.2V40" stroke="#2a8fe0" stroke-width="1.2"/>
 <g fill="none" stroke="#d8cbea" stroke-width="1.1" stroke-linejoin="round">
  <path d="M107.5 36.2H111L112.2 37.4H117.6V43.6H107.5Z"/>
  <path d="M245.2 36.2H248.7L249.9 37.4H255.3V43.6H245.2Z"/>
  <path d="M334.9 36.2H338.4L339.6 37.4H345V43.6H334.9Z"/>
  <path d="M438.3 36.2H441.8L443 37.4H448.4V43.6H438.3Z"/>
  <path d="M517.4 36.2H520.9L522.1 37.4H527.5V43.6H517.4Z"/>
  <path d="M620.5 36.2H624L625.2 37.4H630.6V43.6H620.5Z"/>
  <path d="M692.7 36.2H696.2L697.4 37.4H702.8V43.6H692.7Z"/>
  <path d="M779.9 36.2H783.4L784.6 37.4H790V43.6H779.9Z"/>
  <path d="M948.4 36.2H951.9L953.1 37.4H958.5V43.6H948.4Z"/>
 </g>
 <path d="M918 37L920.5 39.5L918 42M921.3 37L923.8 39.5L921.3 42" fill="none" stroke="#f1ebf8" stroke-width="1.1"/>
 <path d="M936.6 35V44" stroke="#4a2b74" stroke-width="1.2"/>

 <!-- sidebar -->
 <rect x="0.5" y="183.5" width="27.8" height="28.5" rx="3" fill="#5b5650" stroke="#55793f" stroke-width="1"/>
 <g fill="none" stroke="#ebe9e5" stroke-width="1.3" stroke-linejoin="round" stroke-linecap="round">
  <path d="M5.2 109.6L11.9 103.4L18.6 109.6M6.9 108.2V114.6H10.2V110.8H13.6V114.6H16.9V108.2"/>
  <rect x="5.4" y="162.6" width="13.6" height="11" rx="2"/>
  <circle cx="7.4" cy="195" r="1.7"/><path d="M9.1 195H18.4"/><path d="M6.3 199.4H17.2M6.3 202.2H17.2"/>
  <rect x="10.4" y="219.6" width="3.2" height="15.6" rx="1.6" transform="rotate(-45 12 227.4)"/>
  <path d="M10.4 219.8H13.6V232.8L12 235.2L10.4 232.8Z" transform="rotate(45 12 227.4)"/>
  <rect x="6.2" y="252" width="7.6" height="5" rx="2.5" transform="rotate(45 10 254.5)"/>
  <rect x="10.4" y="256" width="7.6" height="5" rx="2.5" transform="rotate(45 14.2 258.5)"/>
  <path d="M7.2 279.8H13.4L17.2 283.6V292.6H7.2Z M13.2 280V283.8H17"/>
  <path d="M7.2 309.6H13.4L17.2 313.4V322.4H7.2Z M13.2 309.8V313.6H17"/>
  <g transform="translate(13.4 344.6) rotate(45)"><path d="M-3.8 -1.6H3.8V0.6A3.8 3.8 0 0 1 -3.8 0.6Z M-1.8 -1.6V-5.4M1.8 -1.6V-5.4M0 4.4V9.2"/></g>
  <rect x="5.4" y="371.6" width="13.2" height="6.6" rx="3.3"/>
  <path d="M12 397.5V405.5M8.6 402.2L12 405.6L15.4 402.2M6.2 405.5V409.5H17.8V405.5"/>
  <path d="M7.2 427.4H13.4L17.2 431.2V439.8H7.2Z M13.2 427.6V431.4H17"/>
 </g>
 <g fill="#ebe9e5">
  <rect x="7.6" y="161.2" width="1.2" height="2.4"/><rect x="10.4" y="161.2" width="1.2" height="2.4"/><rect x="13" y="161.2" width="1.2" height="2.4"/><rect x="15.6" y="161.2" width="1.2" height="2.4"/>
  <rect x="8" y="166.6" width="8.4" height="1.4"/><rect x="8" y="169.6" width="8.4" height="1.4"/>
  <circle cx="12.6" cy="195" r="1.1"/><circle cx="15.6" cy="195" r="1.1"/>
 </g>
 <rect x="6" y="132.8" width="12.2" height="12.4" rx="1.6" fill="#f3f1ee"/>
 <g fill="none" stroke="#322e2a" stroke-width="1">
  <rect x="10.9" y="133.4" width="2.4" height="11.2" rx="1.2" transform="rotate(-45 12.1 139)"/>
  <path d="M10.9 133.6H13.3V143L12.1 144.6L10.9 143Z" transform="rotate(45 12.1 139)"/>
 </g>
 <!-- grid toolbar -->
 <g fill="none" stroke="#5f5c59" stroke-width="1.2" stroke-linecap="round" stroke-linejoin="round">
  <circle cx="104" cy="177.6" r="4.2"/><path d="M107 180.6L110 183.4"/>
  <path d="M113.4 177.2L116 179.8L118.6 177.2"/>
 </g>
 <path d="M362.2 177L365 179.8L367.8 177" fill="none" stroke="#46433f" stroke-width="1"/>
 <g fill="none" stroke="#c5c2be" stroke-width="1.1" stroke-linejoin="round">
  <rect x="903.6" y="173.6" width="9" height="8.8" rx="1.4"/>
  <path d="M909.4 176.6H906.2M907.6 175.2L906.1 176.6L907.6 178M906.2 176.6H909.6A1.6 1.6 0 0 1 909.6 179.8H906.2"/>
 </g>
 <!-- scrollbar -->
 <path d="M1016.5 60.6L1018.9 57.8L1021.3 60.6Z" fill="#a3a3a3"/>
 <path d="M1016.5 511L1018.9 513.8L1021.3 511Z" fill="#505050"/>
 <!-- dev toolbar icons -->
 <g fill="none" stroke="#e2e8da" stroke-width="1.2" stroke-linejoin="round" stroke-linecap="round">
  <path d="M312 508L317.2 503L322.4 508M313.6 506.6V513.4H316V509.6H318.6V513.4H321V506.6M320.4 503.6V505.6"/>
  <path d="M345.6 503.4H340.4V512.8H349.8V507.6M342.6 510.6L343.2 508.2L348.4 503L350 504.6L344.8 509.8Z"/>
  <path d="M412.6 503H417.6L421 506.4V508.4M412.6 503V513H416.6M417.4 503V506.6H421M417.8 512.6L418.2 510.6L421.6 507.2L422.8 508.4L419.4 511.8Z"/>
  <path d="M472.4 511.6A5.2 5.2 0 1 0 470.8 507.4M470.2 510.2L470.9 507.6L473.4 508.6M476.2 505V508.4L478.6 509.8"/>
  <rect x="518.6" y="505.8" width="10.6" height="5" rx="2.5"/><circle cx="521.2" cy="508.3" r="1.6"/>
  <rect x="589.2" y="505.8" width="10.6" height="5" rx="2.5"/><circle cx="591.8" cy="508.3" r="1.6"/>
  <path d="M549 505.2A2.8 2.8 0 0 1 554 505.2M547.6 506.4H555.4V510A3.9 3.9 0 0 1 547.6 510Z M551.5 506.4V513.6M546.2 504.2L547.6 506M556.8 504.2L555.4 506M545.8 508.6H547.6M555.4 508.6H557.2M546.2 512.8L548 511.2M556.8 512.8L555 511.2"/>
  <path d="M617.4 505.6V503.2H619.8M624.8 503.2H627.2V505.6M627.2 510.6V513H624.8M619.8 513H617.4V510.6M620.4 505.6L625 508.4L622.8 509.2L624.8 511.6M622.8 509.2L621.6 511.4Z"/>
  <path d="M686.2 505.8V504A1 1 0 0 1 687.2 503H694.6A1 1 0 0 1 695.6 504V506A1 1 0 0 1 694.6 507H687.2A1 1 0 0 1 686.2 506ZM685.8 505H685A.8.8 0 0 0 684.2 505.8V508.4A.8.8 0 0 0 685 509.2H690.4V510.6M689.4 510.6H691.4V513.6H689.4Z"/>
  <circle cx="760.4" cy="508.4" r="5.3"/>
 </g>
 <circle cx="760.4" cy="505.8" r="0.9" fill="#e2e8da"/>
 <path d="M760.4 507.6V511.4" stroke="#e2e8da" stroke-width="1.6"/>
 <g transform="translate(788.2 508.3)" fill="none" stroke="#e2e8da" stroke-width="1.2" stroke-linejoin="round">
  <path d="M-1.3 -5.2H1.3L1.8 -3.6L3.3 -4.4L5.1 -2.6L4.3 -1.1L5.2 -0.6V1.3L3.6 1.8L4.4 3.3L2.6 5.1L1.1 4.3L0.6 5.2H-1.3L-1.8 3.6L-3.3 4.4L-5.1 2.6L-4.3 1.1L-5.2 0.6V-1.3L-3.6 -1.8L-4.4 -3.3L-2.6 -5.1L-1.1 -4.3Z"/>
  <circle r="1.9"/>
 </g>
 <!-- header -->
 <g fill="none" stroke="#f2f2ec" stroke-width="1.5">
  <path d="M4.7 69.5H19M4.7 73.2H19M4.7 76.9H19"/>
 </g>
 <g fill="none" stroke="#f2f2ec" stroke-width="1.3" stroke-linejoin="round">
  <path d="M136.8 73.6L143 67.8L149.2 73.6M138.4 72.2V78.6H141.4V75H144.6V78.6H147.6V72.2"/>
  <circle cx="916.6" cy="72.2" r="4.6"/><path d="M920 75.6L924.3 79"/>
  <circle cx="949.6" cy="70.7" r="3.2"/><path d="M944.4 79.2C944.8 76.2 947 74.6 949.6 74.6C952.2 74.6 954.4 76.2 954.8 79.2"/>
  <path d="M992.2 71.6L996.1 75.6L1000 71.6"/>
 </g>
</svg>
</body></html>
